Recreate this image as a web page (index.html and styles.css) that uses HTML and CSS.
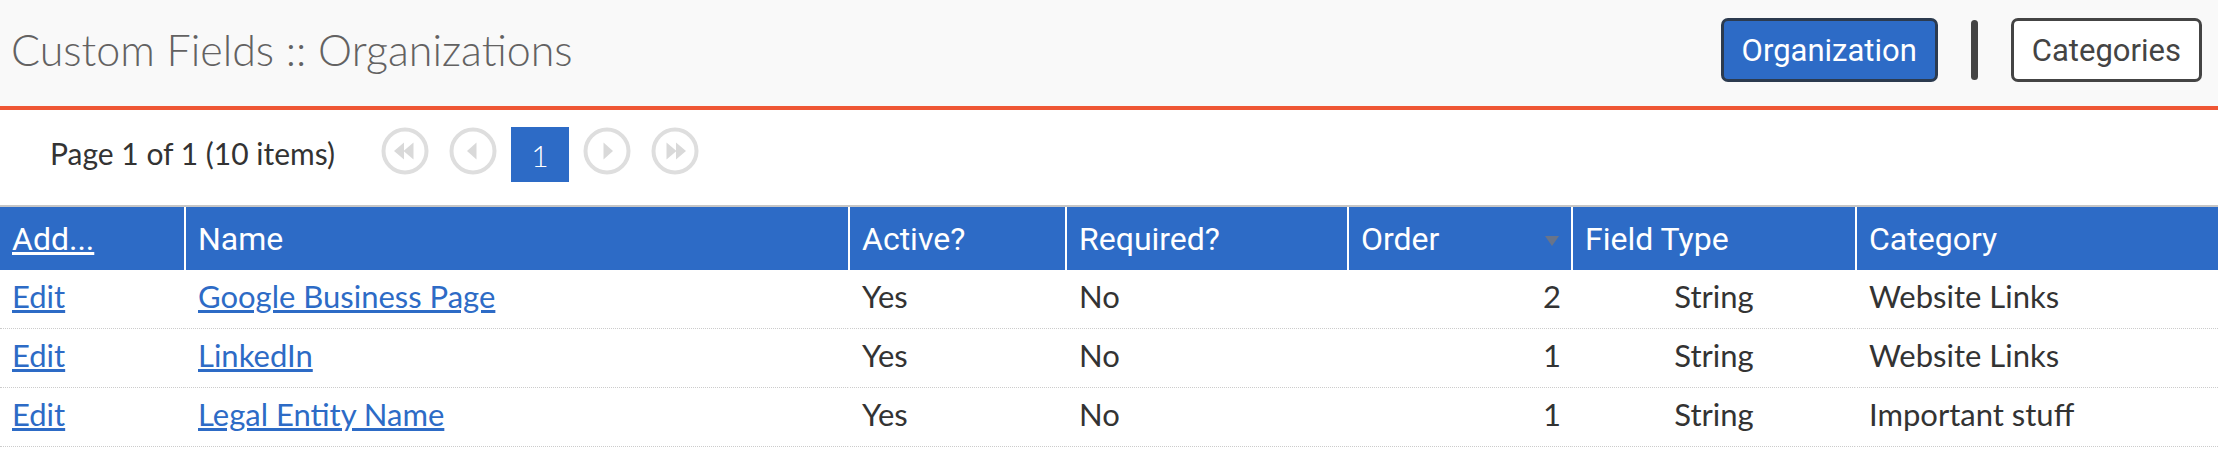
FILE: index.html
```html
<!DOCTYPE html>
<html lang="en">
<head>
<meta charset="utf-8">
<title>Custom Fields :: Organizations</title>
<link rel="stylesheet" href="styles.css">
</head>
<body>
<header class="topbar">
  <h1 class="title">Custom Fields :: Organizations</h1>
  <nav class="tabs">
    <button class="tab tab-active" type="button">Organization</button>
    <span class="divider"></span>
    <button class="tab" type="button">Categories</button>
  </nav>
</header>

<div class="pager">
  <span class="pager-info">Page 1 of 1 (10 items)</span>
  <div class="pager-btns">
    <svg class="pg-btn pg-first" width="48" height="48" viewBox="0 0 48 48" aria-label="First">
      <circle cx="24" cy="24" r="21.5" fill="none" stroke="#dedede" stroke-width="4"/>
      <path d="M13 24 L23 15.5 L23 32.5 Z M22.5 24 L32.5 15.5 L32.5 32.5 Z" fill="#d9d9d9"/>
    </svg>
    <svg class="pg-btn pg-prev" width="48" height="48" viewBox="0 0 48 48" aria-label="Previous">
      <circle cx="24" cy="24" r="21.5" fill="none" stroke="#dedede" stroke-width="4"/>
      <path d="M18 24 L27.5 15.5 L27.5 32.5 Z" fill="#d9d9d9"/>
    </svg>
    <span class="page-current">1</span>
    <svg class="pg-btn pg-next" width="48" height="48" viewBox="0 0 48 48" aria-label="Next">
      <circle cx="24" cy="24" r="21.5" fill="none" stroke="#dedede" stroke-width="4"/>
      <path d="M30 24 L20.5 15.5 L20.5 32.5 Z" fill="#d9d9d9"/>
    </svg>
    <svg class="pg-btn pg-last" width="48" height="48" viewBox="0 0 48 48" aria-label="Last">
      <circle cx="24" cy="24" r="21.5" fill="none" stroke="#dedede" stroke-width="4"/>
      <path d="M25.5 24 L15.5 15.5 L15.5 32.5 Z M35 24 L25 15.5 L25 32.5 Z" fill="#d9d9d9"/>
    </svg>
  </div>
</div>

<table class="grid">
  <thead>
    <tr>
      <th class="c-edit"><a href="#" class="head-link">Add...</a></th>
      <th class="c-name">Name</th>
      <th class="c-active">Active?</th>
      <th class="c-req">Required?</th>
      <th class="c-order">Order<span class="sort-arrow"></span></th>
      <th class="c-type">Field Type</th>
      <th class="c-cat">Category</th>
    </tr>
  </thead>
  <tbody>
    <tr>
      <td><a href="#" class="link">Edit</a></td>
      <td><a href="#" class="link">Google Business Page</a></td>
      <td>Yes</td>
      <td>No</td>
      <td class="num">2</td>
      <td class="center">String</td>
      <td>Website Links</td>
    </tr>
    <tr>
      <td><a href="#" class="link">Edit</a></td>
      <td><a href="#" class="link">LinkedIn</a></td>
      <td>Yes</td>
      <td>No</td>
      <td class="num">1</td>
      <td class="center">String</td>
      <td>Website Links</td>
    </tr>
    <tr>
      <td><a href="#" class="link">Edit</a></td>
      <td><a href="#" class="link">Legal Entity Name</a></td>
      <td>Yes</td>
      <td>No</td>
      <td class="num">1</td>
      <td class="center">String</td>
      <td>Important stuff</td>
    </tr>
  </tbody>
</table>
</body>
</html>
```

FILE: styles.css
```css
* { box-sizing: border-box; }

html, body {
  margin: 0;
  padding: 0;
  background: #ffffff;
  font-family: "Lato", "Liberation Sans", sans-serif;
  color: #333333;
}

.topbar {
  display: flex;
  justify-content: space-between;
  align-items: center;
  padding: 18px 16px 24px 11px;
  background: #f9f9f9;
  border-bottom: 4px solid #ef5634;
}

.title {
  margin: 0;
  font-family: "Lato", "Liberation Sans", sans-serif;
  font-weight: 300;
  font-size: 43px;
  line-height: 42px;
  color: #636262;
}

.tabs {
  display: flex;
  align-items: center;
  gap: 33px;
}

.tab {
  height: 64px;
  margin: 0;
  padding: 0 18px;
  border: 3px solid #444444;
  border-radius: 7px;
  background: #ffffff;
  color: #444444;
  font-family: "Roboto", "Liberation Sans", sans-serif;
  font-size: 31px;
  line-height: 1;
}

.tab-active {
  background: #2d6bc6;
  border-color: #2c3b4f;
  color: #ffffff;
}

.divider {
  width: 7px;
  height: 60px;
  border-radius: 4px;
  background: #444444;
}

.pager {
  display: flex;
  align-items: flex-start;
  height: 95px;
  padding: 17px 0 0 50px;
}

.pager-info {
  margin-top: 8px;
  margin-right: 46px;
  font-size: 30px;
  line-height: 36px;
  color: #333333;
}

.pager-btns {
  display: flex;
  align-items: flex-start;
}

.pg-btn { display: block; }
.pg-first { margin-right: 20px; }
.pg-prev { margin-right: 14px; }
.pg-next { margin-left: 14px; margin-right: 20px; }

.page-current {
  display: flex;
  align-items: center;
  justify-content: center;
  width: 58px;
  height: 55px;
  background: #2d6bc6;
  color: #ffffff;
  font-size: 30px;
  font-weight: 300;
}

.grid {
  width: 100%;
  border-collapse: separate;
  border-spacing: 0;
  table-layout: fixed;
  border-top: 2px solid #c6c6c6;
}

.grid th {
  padding: 14px 12px 13px;
  background: #2d6bc6;
  color: #ffffff;
  font-family: "Roboto", "Liberation Sans", sans-serif;
  font-weight: 400;
  font-size: 32px;
  line-height: 36px;
  text-align: left;
  border-left: 2px solid #ffffff;
  white-space: nowrap;
}

.grid th:first-child { border-left: 0; }

.c-edit { width: 184px; }
.c-name { width: 664px; }
.c-active { width: 217px; }
.c-req { width: 282px; }
.c-order { width: 224px; }
.c-type { width: 284px; }

.head-link {
  color: #ffffff;
  text-decoration: underline;
}

.sort-arrow {
  float: right;
  width: 0;
  height: 0;
  margin-top: 15px;
  border-left: 7px solid transparent;
  border-right: 7px solid transparent;
  border-top: 10px solid #68748a;
}

.grid td {
  padding: 8px 12px 14px;
  font-size: 31px;
  line-height: 36px;
  color: #333333;
  border-left: 2px solid transparent;
  border-bottom: 1px dotted #cccccc;
  white-space: nowrap;
}

.grid td:first-child { border-left: 0; }

.grid td.num {
  text-align: right;
  padding-right: 10px;
}

.grid td.center { text-align: center; }

.link {
  color: #2d6bc6;
  text-decoration: underline;
}
```
